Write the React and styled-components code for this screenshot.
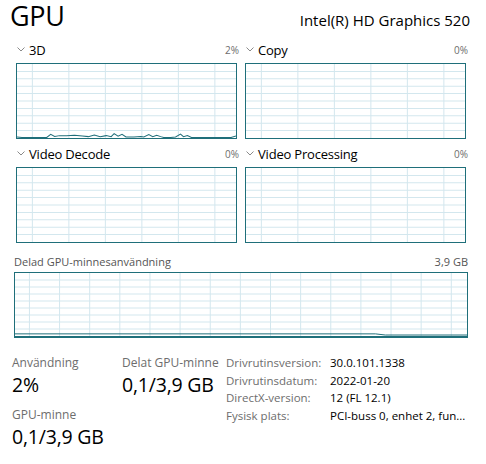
import React from "react";
import styled, { createGlobalStyle } from "styled-components";

const GlobalStyle = createGlobalStyle`
  html, body {
    margin: 0;
    padding: 0;
    background: #ffffff;
  }
  body {
    font-family: "Open Sans", "Noto Sans", "Liberation Sans", sans-serif;
    color: #000;
  }
`;

const ACCENT = "#1f6f7a";
const GRID = "#d3e7ee";

// Chart: grid lines + the usage line, drawn as svg
function Chart({ width, height, points, cols, colOffset, rows }) {
  const vLines = [];
  for (let x = colOffset; x < width; x += width / cols) vLines.push(x);
  const hLines = [];
  for (let i = 1; i < rows; i++) hLines.push((height / rows) * i);

  return (
    <svg
      width="100%"
      height="100%"
      viewBox={`0 0 ${width} ${height}`}
      preserveAspectRatio="none"
    >
      {hLines.map((y) => (
        <line key={"h" + y} x1="0" x2={width} y1={y} y2={y} stroke={GRID} strokeWidth="1" vectorEffect="non-scaling-stroke" />
      ))}
      {vLines.map((x) => (
        <line key={"v" + x} x1={x} x2={x} y1="0" y2={height} stroke={GRID} strokeWidth="1" vectorEffect="non-scaling-stroke" />
      ))}
      {points && (
        <polyline
          points={points.map((p) => p.join(",")).join(" ")}
          fill="none"
          stroke={ACCENT}
          strokeWidth="1"
          vectorEffect="non-scaling-stroke"
        />
      )}
    </svg>
  );
}

const data3d = [
  [0, 74], [5, 74.5], [30, 74.5], [34, 71.3], [38, 73.5], [43, 72.6], [50, 72.6],
  [58, 72.2], [66, 73], [72, 73.6], [78, 72], [84, 73.6], [90, 72.6], [95, 73.6],
  [98, 70.5], [102, 73.2], [106, 71.2], [110, 74], [118, 74], [125, 73.6], [128, 74],
  [133, 71.6], [137, 73.6], [141, 72.2], [145, 73.6], [148, 74.5], [155, 74.5],
  [160, 74], [165, 71], [168, 73.6], [172, 72.6], [176, 74.5], [216, 74.5], [221, 73],
];

const dataShared = [[0, 62.8], [362, 62.8], [372, 64], [454, 64]];

const panels = [
  { title: "3D", value: "2%", points: data3d },
  { title: "Copy", value: "0%" },
  { title: "Video Decode", value: "0%" },
  { title: "Video Processing", value: "0%" },
];

const info = [
  ["Drivrutinsversion:", "30.0.101.1338"],
  ["Drivrutinsdatum:", "2022-01-20"],
  ["DirectX-version:", "12 (FL 12.1)"],
  ["Fysisk plats:", "PCI-buss 0, enhet 2, fun..."],
];

function Chevron() {
  return (
    <svg width="8" height="5" viewBox="0 0 8 5">
      <polyline points="0.5,0.5 4,4 7.5,0.5" fill="none" stroke="#8a8a8a" strokeWidth="1" />
    </svg>
  );
}

export default function App() {
  return (
    <Page>
      <GlobalStyle />
      <Header>
        <h1>GPU</h1>
        <span>Intel(R) HD Graphics 520</span>
      </Header>

      <PanelGrid>
        {panels.map(({ title, value, points }) => (
          <Panel key={title}>
            <PanelHead>
              <Chevron />
              <span className="title">{title}</span>
              <span className="value">{value}</span>
            </PanelHead>
            <Graph $height={76}>
              <Chart width={221} height={75} points={points} cols={6} colOffset={15.5} rows={10} />
            </Graph>
          </Panel>
        ))}
      </PanelGrid>

      <Wide>
        <WideHead>
          <span>Delad GPU-minnesanvändning</span>
          <span>3,9 GB</span>
        </WideHead>
        <Graph $height={66} $thick>
          <Chart width={454} height={65} points={dataShared} cols={15} colOffset={14.5} rows={9} />
        </Graph>
      </Wide>

      <Stats>
        <StatCol>
          <Stat>
            <label>Användning</label>
            <strong>2%</strong>
          </Stat>
          <Stat>
            <label>GPU-minne</label>
            <strong>0,1/3,9 GB</strong>
          </Stat>
        </StatCol>
        <StatCol>
          <Stat>
            <label>Delat GPU-minne</label>
            <strong>0,1/3,9 GB</strong>
          </Stat>
        </StatCol>
        <InfoTable>
          {info.map(([k, v]) => (
            <React.Fragment key={k}>
              <dt>{k}</dt>
              <dd>{v}</dd>
            </React.Fragment>
          ))}
        </InfoTable>
      </Stats>
    </Page>
  );
}

const Page = styled.div`
  width: 486px;
  height: 464px;
  box-sizing: border-box;
  padding: 0 18px 0 10px;
  overflow: hidden;
`;

const Header = styled.div`
  display: flex;
  justify-content: space-between;
  align-items: flex-end;
  height: 39px;
  padding-bottom: 8px;
  box-sizing: border-box;

  h1 {
    margin: 0;
    font-weight: 400;
    font-size: 27px;
    line-height: 31px;
    letter-spacing: -0.3px;
  }
  span {
    font-size: 15px;
    line-height: 22px;
    margin-right: -2px;
  }
`;

const PanelGrid = styled.div`
  display: grid;
  grid-template-columns: 1fr 1fr;
  column-gap: 8px;
  row-gap: 4px;
  padding: 0 2px 0 6px;
`;

const Panel = styled.div`
  display: flex;
  flex-direction: column;
`;

const PanelHead = styled.div`
  display: flex;
  align-items: center;
  height: 21px;
  padding: 0 0 0 1px;
  margin-bottom: 3px;

  .title {
    margin-left: 4px;
    font-size: 13px;
    letter-spacing: -0.2px;
    flex: 1;
  }
  .value {
    font-size: 10px;
    color: #6d6d6d;
    margin-right: -2px;
  }
`;

const Graph = styled.div`
  height: ${(p) => p.$height}px;
  box-sizing: border-box;
  border: 1px solid ${ACCENT};
  border-bottom-width: ${(p) => (p.$thick ? 2 : 1)}px;
  background: #fff;
  display: flex;

  svg {
    display: block;
  }
`;

const Wide = styled.div`
  padding: 9px 0 0 4px;
`;

const WideHead = styled.div`
  display: flex;
  justify-content: space-between;
  align-items: center;
  height: 18px;
  margin-bottom: 2px;
  font-size: 11px;
  color: #555;
`;

const Stats = styled.div`
  display: grid;
  grid-template-columns: 110px 104px 1fr;
  align-items: start;
  padding: 16px 0 0 2px;
`;

const StatCol = styled.div`
  display: flex;
  flex-direction: column;
  gap: 8px;
`;

const Stat = styled.div`
  display: flex;
  flex-direction: column;

  label {
    font-size: 12px;
    color: #6d6d6d;
    line-height: 18px;
  }
  strong {
    font-weight: 400;
    font-size: 19.5px;
    line-height: 26px;
    letter-spacing: -0.2px;
  }
`;

const InfoTable = styled.dl`
  margin: 0;
  display: grid;
  grid-template-columns: 104px 1fr;
  align-content: start;
  row-gap: 0;
  font-size: 11.5px;
  line-height: 17.5px;

  dt {
    color: #6d6d6d;
  }
  dd {
    margin: 0;
    white-space: nowrap;
  }
`;
